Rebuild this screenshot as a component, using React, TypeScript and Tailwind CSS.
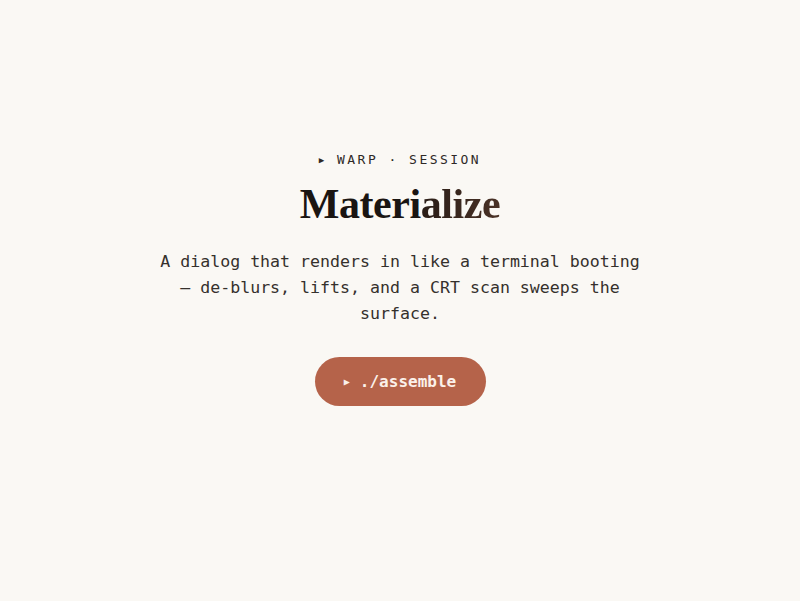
export default function App() {
  return (
    <div className="min-h-[601px] w-full bg-[#faf8f4] flex flex-col items-center pt-[153px] text-[#2a2522]">
      <div
        className="text-[13px] leading-none tracking-[0.19em] text-[#2e2926] font-medium"
        style={{ fontFamily: '"DejaVu Sans Mono", "Liberation Mono", monospace' }}
      >
        <span className="text-[9px] align-[1px]">▶</span> WARP · SESSION
      </div>
      <h1
        className="mt-[14px] text-[42px] leading-[48px] font-bold tracking-[-0.01em]"
        style={{ fontFamily: '"Liberation Serif", "DejaVu Serif", serif' }}
      >
        <span className="text-[#1a1512]">Materi</span>
        <span className="bg-gradient-to-r from-[#2a1d17] to-[#4a3226] bg-clip-text text-transparent">alize</span>
      </h1>
      <p
        className="mt-[21px] w-[486px] text-center text-[16.6px] leading-[26px] text-[#35302c]"
        style={{ fontFamily: '"DejaVu Sans Mono", "Liberation Mono", monospace' }}
      >
        A dialog that renders in like a terminal booting — de-blurs, lifts, and a CRT scan sweeps the surface.
      </p>
      <button
        className="mt-[30px] h-[49px] w-[171px] rounded-full bg-[#b5634a] text-[#fbf1ea] text-[16px] font-semibold flex items-center justify-center gap-[10px]"
        style={{ fontFamily: '"DejaVu Sans Mono", "Liberation Mono", monospace' }}
      >
        <span className="text-[10px]">▶</span>
        <span>./assemble</span>
      </button>
    </div>
  );
}
